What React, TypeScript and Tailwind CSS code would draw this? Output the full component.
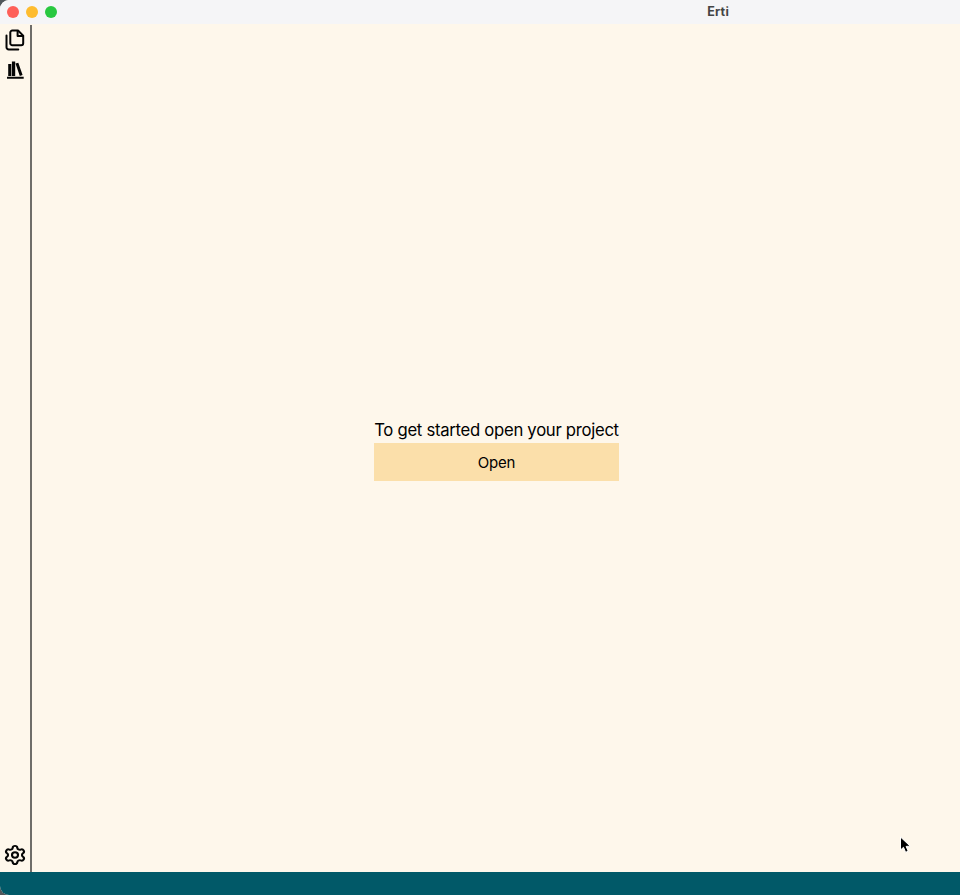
import { Settings } from "lucide-react";

function FilesIcon() {
  return (
    <svg width="20" height="22" viewBox="0 0 20 22" fill="none" stroke="#050505" strokeWidth="2" strokeLinecap="round" strokeLinejoin="round">
      <path d="M13 1.5H7.3a2 2 0 0 0-2 2v10.7a2 2 0 0 0 2 2h8.9a2 2 0 0 0 2-2V6.6Z" />
      <path d="M12.6 2v4.9h5" />
      <path d="M1.5 6.5v11.7a2.2 2.2 0 0 0 2.2 2.2h9.6" />
    </svg>
  );
}

function BooksIcon() {
  return (
    <svg width="18" height="18" viewBox="0 0 18 18" fill="#050505">
      <path d="M2.2 3h3.1v12H2.2zM5.9.6h3.3V15H5.9zM9.5 2.6l2.8-.9 4.3 12.4-2.8.9zM1 15.8h16.7v1.9H1z" />
    </svg>
  );
}

export default function App() {
  return (
    <div className="h-[895px] w-[960px] overflow-hidden bg-[#51575b] font-['Inter','Liberation_Sans',sans-serif] text-black">
      <div className="relative flex h-full flex-col overflow-hidden rounded-l-[9px] bg-[#fef7eb]">
        <header className="flex h-[24px] shrink-0 items-center bg-[#f5f5f7] pb-px pl-[7.3px]">
          <div className="flex w-[51px] shrink-0 gap-[7px]">
            <span className="size-[12px] rounded-full bg-[#fe5f58]" />
            <span className="size-[12px] rounded-full bg-[#febc2f]" />
            <span className="size-[12px] rounded-full bg-[#28c840]" />
          </div>
          <h1 className="mt-px ml-[649px] text-[12.5px] leading-[20px] font-bold tracking-[0.2px] text-[#444444]">Erti</h1>
        </header>
        <div className="flex min-h-0 flex-1">
          <aside className="mt-px flex w-[32px] shrink-0 flex-col items-start border-r-2 border-[#6f6d69] pt-1 pb-[6px] pl-[5px]">
            <button aria-label="Files"><FilesIcon /></button>
            <button aria-label="Library" className="mt-[10px] ml-px"><BooksIcon /></button>
            <button aria-label="Settings" className="mt-auto -ml-[2px]"><Settings width={24} height={22} preserveAspectRatio="none" strokeWidth={2.1} color="#050505" /></button>
          </aside>
          <main className="flex flex-1 flex-col items-center justify-center pt-[2px] pl-px">
            <div className="flex w-[245px] flex-col">
              <p className="text-center text-[16.7px] leading-[26px] tracking-[-0.29px] whitespace-nowrap">To get started open your project</p>
              <button className="h-[38px] bg-[#fbdfaa] pt-[2px] text-[15px] tracking-[-0.2px]">Open</button>
            </div>
          </main>
        </div>
        <footer className="h-[23px] shrink-0 bg-[#015968]" />
        <svg className="absolute top-[836px] left-[899px]" width="13" height="18" viewBox="0 0 13 18">
          <path d="M1.5 1v13l3-2.7 2.1 5 2.6-1.1-2.1-4.8 4.1-.2Z" fill="black" stroke="white" strokeWidth="1" strokeLinejoin="round" />
        </svg>
      </div>
    </div>
  );
}
